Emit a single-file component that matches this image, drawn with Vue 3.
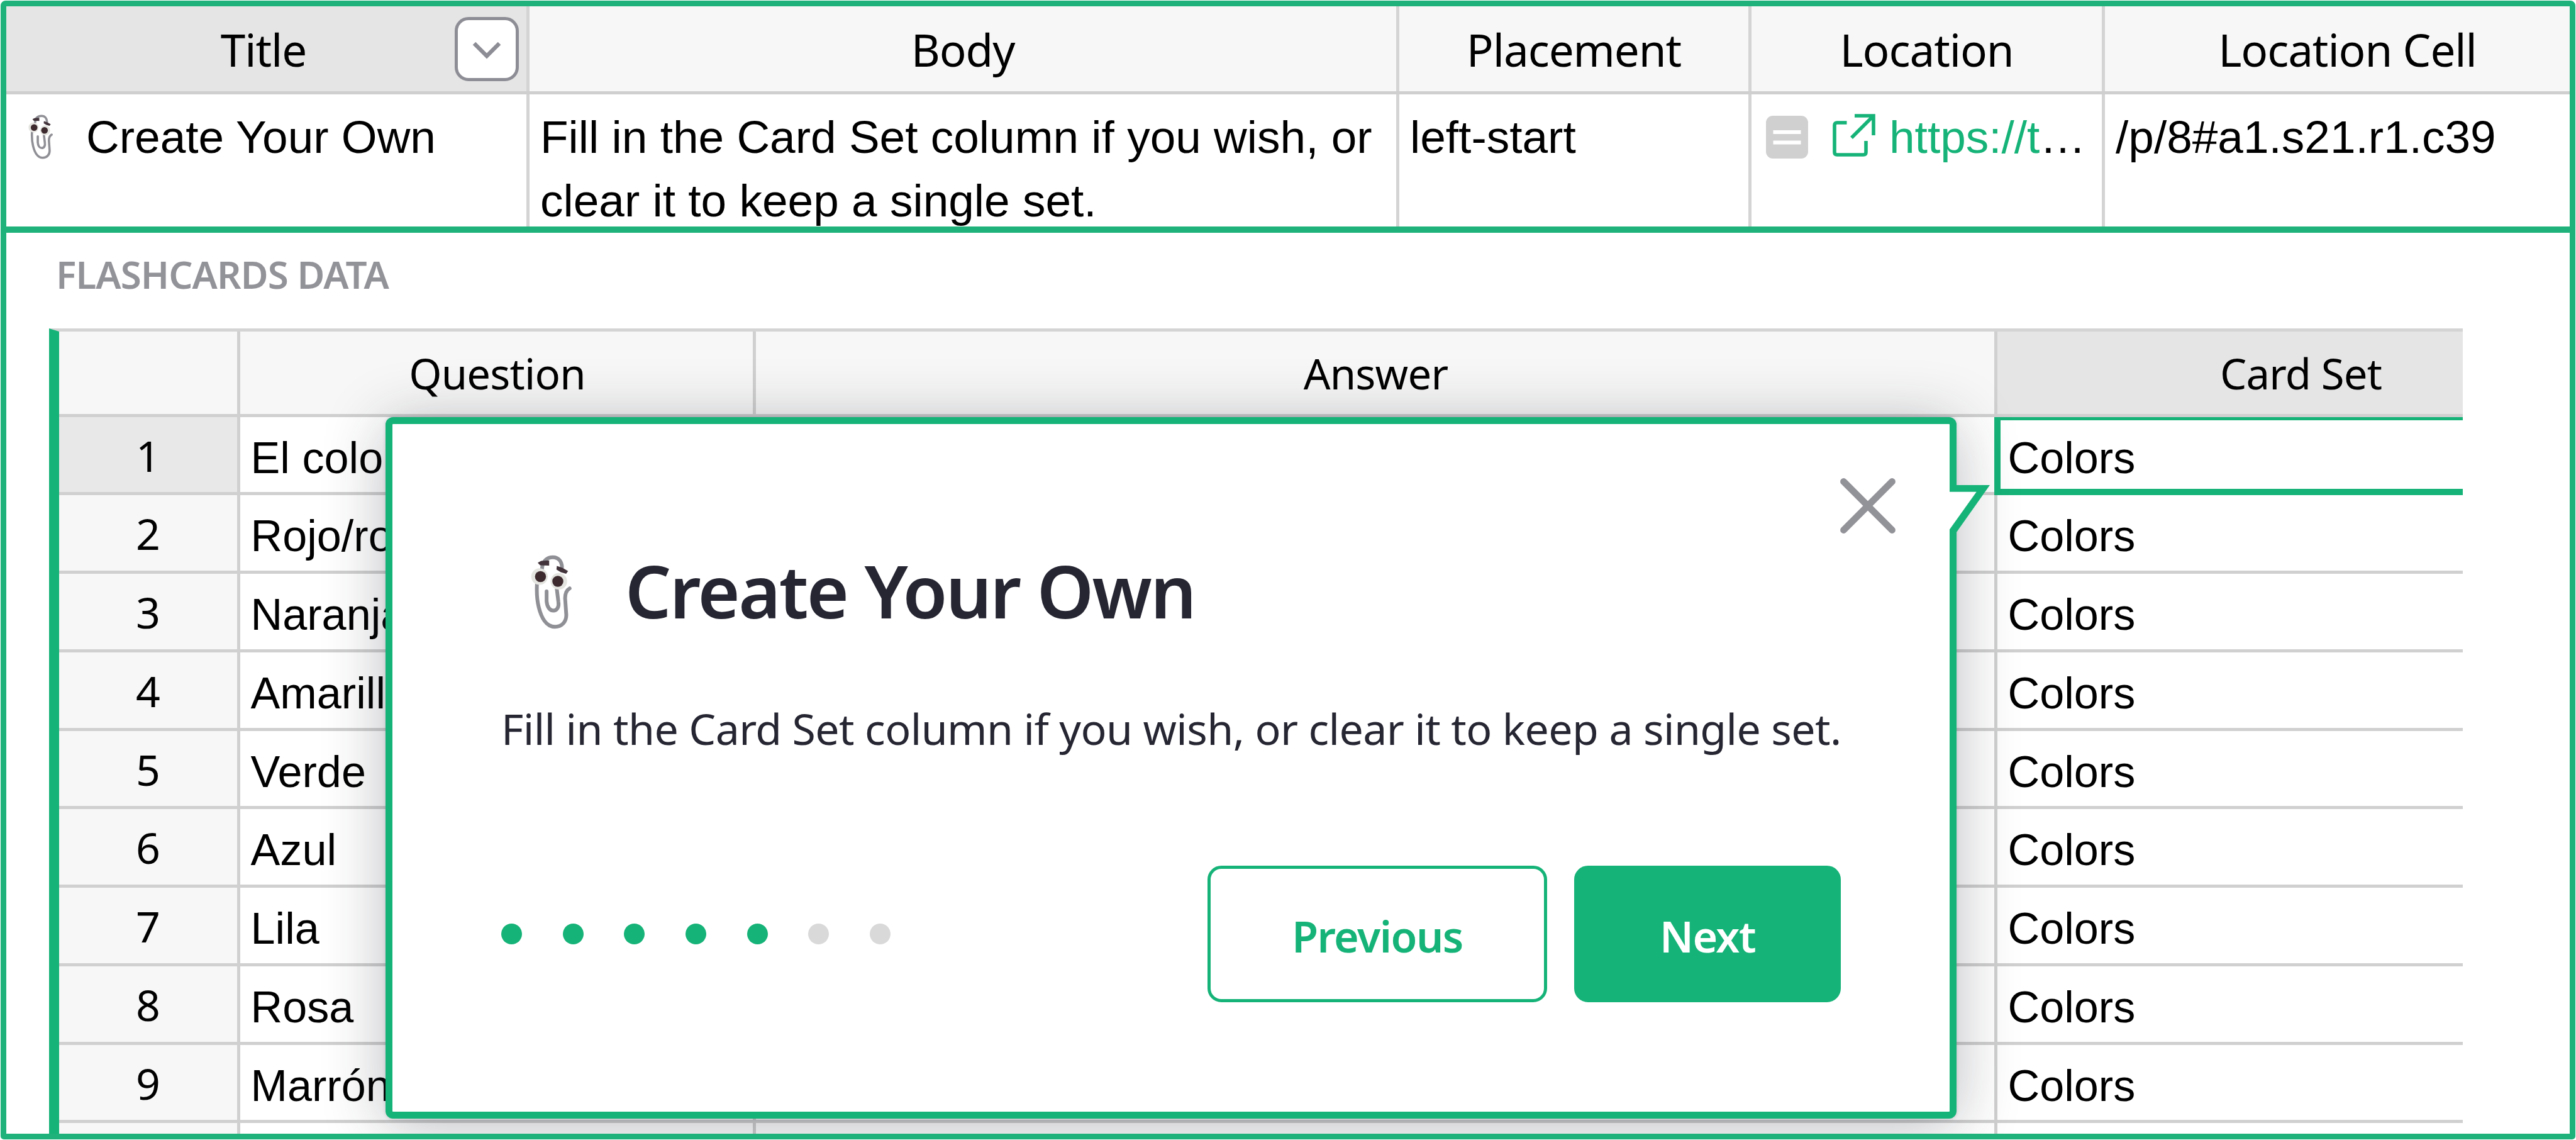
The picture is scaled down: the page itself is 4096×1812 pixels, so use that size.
<script setup>
import { h } from 'vue'

const columns = [
  { name: 'Title', key: 'title' },
  { name: 'Body', key: 'body' },
  { name: 'Placement', key: 'placement' },
  { name: 'Location', key: 'location' },
  { name: 'Location Cell', key: 'cell' },
]
const rows = ['El color', 'Rojo/roja', 'Naranja', 'Amarillo', 'Verde', 'Azul', 'Lila', 'Rosa', 'Marrón', '']
const steps = 7
const currentStep = 5

const wire = { fill: 'none', stroke: '#8f8f96', 'stroke-width': 19, 'stroke-linecap': 'round' }
const Clip = () =>
  h('svg', { viewBox: '138 110 207 377', 'aria-hidden': 'true' }, [
    h('path', { ...wire, d: 'M335 280C318 290 312 305 312 330L318 415C318 450 295 475 260 475C215 475 190 425 178 375C168 335 167 300 169 260M195 178C198 140 220 122 250 122C280 122 295 145 296 172' }),
    h('path', { ...wire, d: 'M218 295L218 345C220 375 235 393 253 393C270 393 282 375 278 350L270 285' }),
    h('circle', { cx: 182, cy: 220, r: 42, fill: '#e4e4e0' }),
    h('circle', { cx: 280, cy: 244, r: 42, fill: '#e4e4e0' }),
    h('circle', { cx: 187, cy: 220, r: 28, fill: '#3c2a2e' }),
    h('circle', { cx: 275, cy: 244, r: 28, fill: '#3c2a2e' }),
    h('path', { d: 'M173 150L190 140L231 138V164L185 163Z', fill: '#43343b' }),
    h('path', { d: 'M270 166L300 176L327 192L317 206L290 198L268 184Z', fill: '#43343b' }),
  ])
</script>

<template>
  <div class="page">
    <div class="frame">
      <section class="tours">
        <div class="row head">
          <div v-for="c in columns" :key="c.key" class="col" :class="c.key">
            <span class="label">{{ c.name }}</span>
            <button v-if="c.key === 'title'" class="menu">
              <svg viewBox="0 0 46 28"><path d="M3 3L23 23L43 3" /></svg>
            </button>
          </div>
        </div>
        <div class="row data">
          <div class="col title"><Clip class="clip" /><span>Create Your Own</span></div>
          <div class="col body">Fill in the Card Set column if you wish, or<br>clear it to keep a single set.</div>
          <div class="col placement">left-start</div>
          <div class="col location">
            <svg class="note" viewBox="0 0 67 68">
              <rect width="67" height="68" rx="11" fill="#d0d0d0" />
              <path d="M11.5 26H55.5M11.5 42.5H55.5" stroke="#fff" stroke-width="6" />
            </svg>
            <svg class="open" viewBox="0 0 68 68">
              <path d="M22.5 14H7Q3 14 3 18V61Q3 65 7 65H49Q53 65 53 61V43M35 3H65V34M65 3L30 38" />
            </svg>
            <span class="url">https://t</span><span class="dots">…</span>
          </div>
          <div class="col cell">/p/8#a1.s21.r1.c39</div>
        </div>
      </section>

      <section class="cards">
        <h2 class="caption">FLASHCARDS DATA</h2>
        <div class="grid">
          <div class="line top">
            <div class="num"></div>
            <div class="question"><span>Question</span></div>
            <div class="answer"><span>Answer</span></div>
            <div class="set"><span>Card Set</span></div>
          </div>
          <div v-for="(q, i) in rows" :key="i" class="line" :class="{ active: i === 0 }">
            <div class="num">{{ i < 9 ? i + 1 : '' }}</div>
            <div class="question">{{ q }}</div>
            <div class="answer"></div>
            <div class="set">{{ i < 9 ? 'Colors' : '' }}</div>
          </div>
        </div>
      </section>

      <div class="popup">
        <svg class="arrow" viewBox="0 0 66 78">
          <path d="M0 10.7V70.6L11 75L64 0H0Z" fill="#fff" stroke="none" />
          <path d="M0 0H64L11 75V78H0V70.6L42.7 10.7H0Z" fill="#16b378" />
        </svg>
        <svg class="close" viewBox="0 0 88 88"><path d="M5.5 5.5L82.5 82.5M82.5 5.5L5.5 82.5" /></svg>
        <h1><Clip class="clip" /><span>Create Your Own</span></h1>
        <p>Fill in the Card Set column if you wish, or clear it to keep a single set.</p>
        <footer>
          <div class="steps">
            <i v-for="s in steps" :key="s" :class="{ done: s <= currentStep }"></i>
          </div>
          <button class="btn prev">Previous</button>
          <button class="btn next">Next</button>
        </footer>
      </div>
    </div>
  </div>
</template>

<style>
html, body { margin: 0; background: #fff; overflow: hidden; }
</style>

<style scoped>
.page {
  box-sizing: border-box;
  width: 4096px;
  height: 1812px;
  padding: 1px;
  background: #fff;
  font-family: "Noto Sans", "Open Sans", sans-serif;
  color: #000;
}
.page * { box-sizing: border-box; }
.frame {
  position: relative;
  width: 4094px;
  height: 1810px;
  border: 9px solid #1fb37b;
  border-radius: 8px 8px 5px 5px;
  overflow: hidden;
}
button { font: inherit; margin: 0; padding: 0; }

/* upper table */
.tours { border-bottom: 10px solid #1fb37b; overflow: hidden; }
.row { display: flex; width: 4108px; }
.head { height: 140px; border-bottom: 5px solid #cfcfcf; background: #f7f7f7; }
.data {
  height: 210px;
  font-family: "Liberation Sans", Arial, sans-serif;
  font-size: 73px;
  line-height: 101px;
}
.col { flex: none; white-space: nowrap; border-right: 5px solid #d4d4d4; }
.col.title { width: 832px; }
.col.body { width: 1383px; }
.col.placement { width: 560px; }
.col.location { width: 562px; }
.col.cell { width: 771px; border-right: 0; }
.data .col { padding: 17px 0 0 17px; }
.data .title, .data .location { display: flex; align-items: flex-start; }
.head .col {
  position: relative;
  display: flex;
  align-items: center;
  justify-content: center;
  padding-top: 2px;
  font-size: 71px;
  letter-spacing: -1.1px;
}
.head .title { background: #e5e5e5; padding-right: 9px; }
.menu {
  position: absolute;
  right: 12px;
  top: 17px;
  width: 102px;
  height: 102px;
  display: flex;
  align-items: center;
  justify-content: center;
  border: 5px solid #8d8d96;
  border-radius: 22px;
  background: #fff;
}
.menu svg { width: 46px; height: 28px; margin-top: 4px; }
.menu path { fill: none; stroke: #8d8d96; stroke-width: 6.5; }
.data .title { padding-left: 35px; }
.data .clip { width: 39px; height: 73px; margin: 14px 53px 0 0; }
.data .location { padding-left: 23px; }
.note { width: 67px; height: 68px; margin-top: 17px; }
.open { width: 68px; height: 68px; margin: 14px 22px 0 39px; }
.open path { fill: none; stroke: #16b378; stroke-width: 5.6; }
.url { color: #16b378; }

/* lower table */
.caption {
  height: 152px;
  margin: 0;
  padding: 0 0 20px 79px;
  line-height: 132px;
  font-size: 60px;
  font-weight: 600;
  letter-spacing: -0.9px;
  color: #929299;
}
.grid {
  width: 3838px;
  margin-left: 68px;
  border-left: 16px solid #16b378;
  border-top: 5px solid #d4d4d4;
  overflow: hidden;
}
.line {
  display: flex;
  height: 124.76px;
  border-bottom: 5px solid #d0d0d0;
  font-family: "Liberation Sans", Arial, sans-serif;
  font-size: 70.2px;
  line-height: 120px;
}
.line > div { flex: none; border-right: 5px solid #d0d0d0; padding: 5px 0 0 16.5px; white-space: nowrap; }
.line > .num {
  width: 288px;
  padding: 1px 0 0;
  background: #f7f7f7;
  font-family: "Noto Sans", sans-serif;
  font-size: 68px;
  text-align: center;
}
.line > .question { width: 820px; }
.line > .answer { width: 1974px; }
.line > .set { width: 968px; }
.line.top {
  height: 135.7px;
  background: #f7f7f7;
  font-family: "Noto Sans", sans-serif;
  font-size: 67px;
  line-height: 133px;
  letter-spacing: -0.8px;
}
.line.top > div { padding: 0 0 0 2px; text-align: center; }
.line.top > .set { background: #e5e5e5; }
.active > .num { background: #e8e8e8; }
.active > .set {
  position: relative;
  z-index: 0;
}
.active > .set::before {
  content: "";
  position: absolute;
  inset: 0 0 -5px -5px;
  border: solid #16b378;
  border-width: 5px 0 10px 10px;
}

/* tour popup */
.popup {
  position: absolute;
  left: 603px;
  top: 653px;
  width: 2498px;
  height: 1115px;
  padding: 198px 173px 0;
  border: 11px solid #16b378;
  border-radius: 12px;
  background: #fff;
  box-shadow: 0 11px 98px rgba(31, 37, 50, 0.31), 0 0 5px rgba(76, 86, 103, 0.24);
  color: #262633;
}
.arrow { position: absolute; left: 2476px; top: 97px; width: 66px; height: 78px; overflow: visible; }
.close { position: absolute; left: 2302px; top: 86px; width: 88px; height: 88px; }
.close path { fill: none; stroke: #929299; stroke-width: 10.8; stroke-linecap: round; }
h1 {
  display: flex;
  margin: 0;
  font-size: 115px;
  font-weight: 600;
  line-height: 134px;
  letter-spacing: -2.7px;
  white-space: nowrap;
}
h1 .clip { width: 65px; height: 118px; margin: 10px 85px 0 47px; }
p {
  margin: 107px 0 0;
  font-size: 68px;
  line-height: 90px;
  letter-spacing: -0.6px;
  white-space: nowrap;
}
footer { display: flex; margin-top: 173px; height: 217px; align-items: center; }
.steps { display: flex; gap: 64.7px; flex: 1; }
.steps i { width: 33px; height: 33px; border-radius: 50%; background: #d9d9d9; }
.steps i.done { background: #16b378; }
.btn {
  height: 217px;
  padding-top: 6px;
  border: 5px solid #16b378;
  border-radius: 22px;
  font-size: 68px;
  font-weight: 600;
  letter-spacing: -1.5px;
}
.prev { width: 540px; background: #fff; color: #16b378; margin-right: 43px; }
.next { width: 424px; background: #16b378; color: #fff; }
</style>
